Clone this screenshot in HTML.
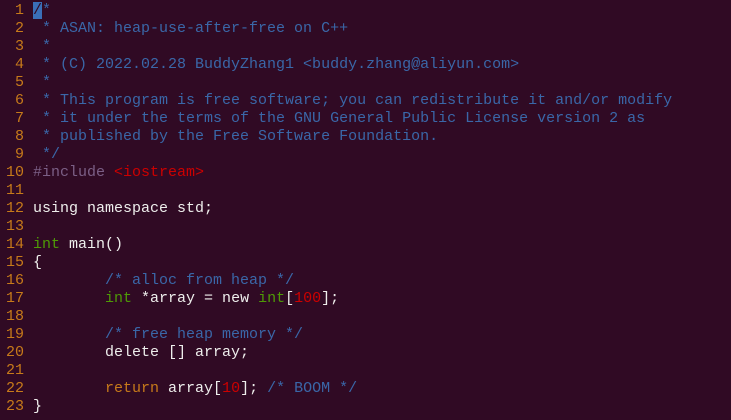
<!DOCTYPE html>
<html><head><meta charset="utf-8"><style>
html,body{margin:0;padding:0;background:#300a24;width:731px;height:420px;overflow:hidden}
pre{margin:0;position:absolute;left:6px;top:2px;font-family:"Liberation Mono",monospace;font-size:15px;line-height:18px;color:#eeeeec;letter-spacing:0}
.n{color:#c77a1a}.c{color:#3a67a8}.g{color:#4e9a06}.r{color:#cc0000}.p{color:#7b5f86}.o{color:#c77a1a}
.cur{background:#3a6fb8;color:#300a24}
</style></head><body><pre><span class="n"> 1 </span><span class="c"><span class="cur">/</span>*</span>
<span class="n"> 2 </span><span class="c"> * ASAN: heap-use-after-free on C++</span>
<span class="n"> 3 </span><span class="c"> *</span>
<span class="n"> 4 </span><span class="c"> * (C) 2022.02.28 BuddyZhang1 &lt;buddy.zhang@aliyun.com&gt;</span>
<span class="n"> 5 </span><span class="c"> *</span>
<span class="n"> 6 </span><span class="c"> * This program is free software; you can redistribute it and/or modify</span>
<span class="n"> 7 </span><span class="c"> * it under the terms of the GNU General Public License version 2 as</span>
<span class="n"> 8 </span><span class="c"> * published by the Free Software Foundation.</span>
<span class="n"> 9 </span><span class="c"> */</span>
<span class="n">10 </span><span class="p">#include</span> <span class="r">&lt;iostream&gt;</span>
<span class="n">11 </span>
<span class="n">12 </span>using namespace std;
<span class="n">13 </span>
<span class="n">14 </span><span class="g">int</span> main()
<span class="n">15 </span>{
<span class="n">16 </span>        <span class="c">/* alloc from heap */</span>
<span class="n">17 </span>        <span class="g">int</span> *array = new <span class="g">int</span>[<span class="r">100</span>];
<span class="n">18 </span>
<span class="n">19 </span>        <span class="c">/* free heap memory */</span>
<span class="n">20 </span>        delete [] array;
<span class="n">21 </span>
<span class="n">22 </span>        <span class="o">return</span> array[<span class="r">10</span>]; <span class="c">/* BOOM */</span>
<span class="n">23 </span>}</pre></body></html>
